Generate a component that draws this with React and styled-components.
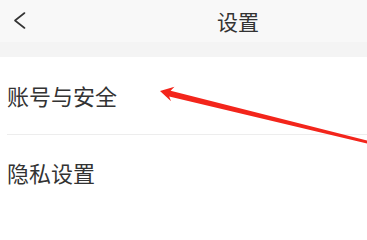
import styled, { createGlobalStyle } from 'styled-components';

const GlobalStyle = createGlobalStyle`
  html, body {
    margin: 0;
    padding: 0;
    background: #ffffff;
    font-family: "Noto Sans CJK SC", "Noto Sans", sans-serif;
  }
`;

const Page = styled.div`
  position: relative;
  width: 367px;
  height: 206px;
  overflow: hidden;
  background: #ffffff;
`;

const Header = styled.header`
  height: 42px;
  background: #f8f8f8;
  display: flex;
  align-items: center;
  padding-left: 12px;
`;

const BackButton = styled.button`
  width: 14px;
  height: 18px;
  padding: 0;
  border: none;
  background: none;
  display: flex;
  align-items: center;
  justify-content: center;
  margin-top: -2px;
`;

const Title = styled.h1`
  margin: 0 0 0 191px;
  font-size: 21px;
  font-weight: 400;
  color: #333333;
  line-height: 1;
`;

const SectionGap = styled.div`
  height: 15px;
  background: #f4f4f4;
`;

const List = styled.ul`
  list-style: none;
  margin: 0;
  padding: 0 0 0 7px;
`;

const Item = styled.li`
  height: ${({ height }) => height}px;
  display: flex;
  align-items: center;
  font-size: 22px;
  line-height: 1;
  color: #333333;
  border-bottom: ${({ divider }) => (divider ? '1px solid #ededed' : 'none')};
  padding-bottom: ${({ lift }) => lift || 0}px;
  box-sizing: border-box;
`;

const Overlay = styled.svg`
  position: absolute;
  left: 0;
  top: 0;
  pointer-events: none;
`;

const App = () => (
  <>
    <GlobalStyle />
    <Page>
      <Header>
        <BackButton aria-label="返回">
          <svg width="13" height="17" viewBox="0 0 13 17">
            <path d="M11.5 1 L2 8.5 L11.5 16" fill="none" stroke="#333" strokeWidth="1.6" strokeLinecap="round" strokeLinejoin="round" />
          </svg>
        </BackButton>
        <Title>设置</Title>
      </Header>
      <SectionGap />
      <List>
        <Item height={78} divider lift={2}>账号与安全</Item>
        <Item height={80} lift={6}>隐私设置</Item>
      </List>
      <Overlay width="367" height="206" viewBox="0 0 367 206">
        <polygon
          points="160,91 174.5,86.8 170.6,90.7 370,141.2 370,144.2 169.2,96.5 171,101.2"
          fill="#f3251b"
        />
      </Overlay>
    </Page>
  </>
);

export default App;
